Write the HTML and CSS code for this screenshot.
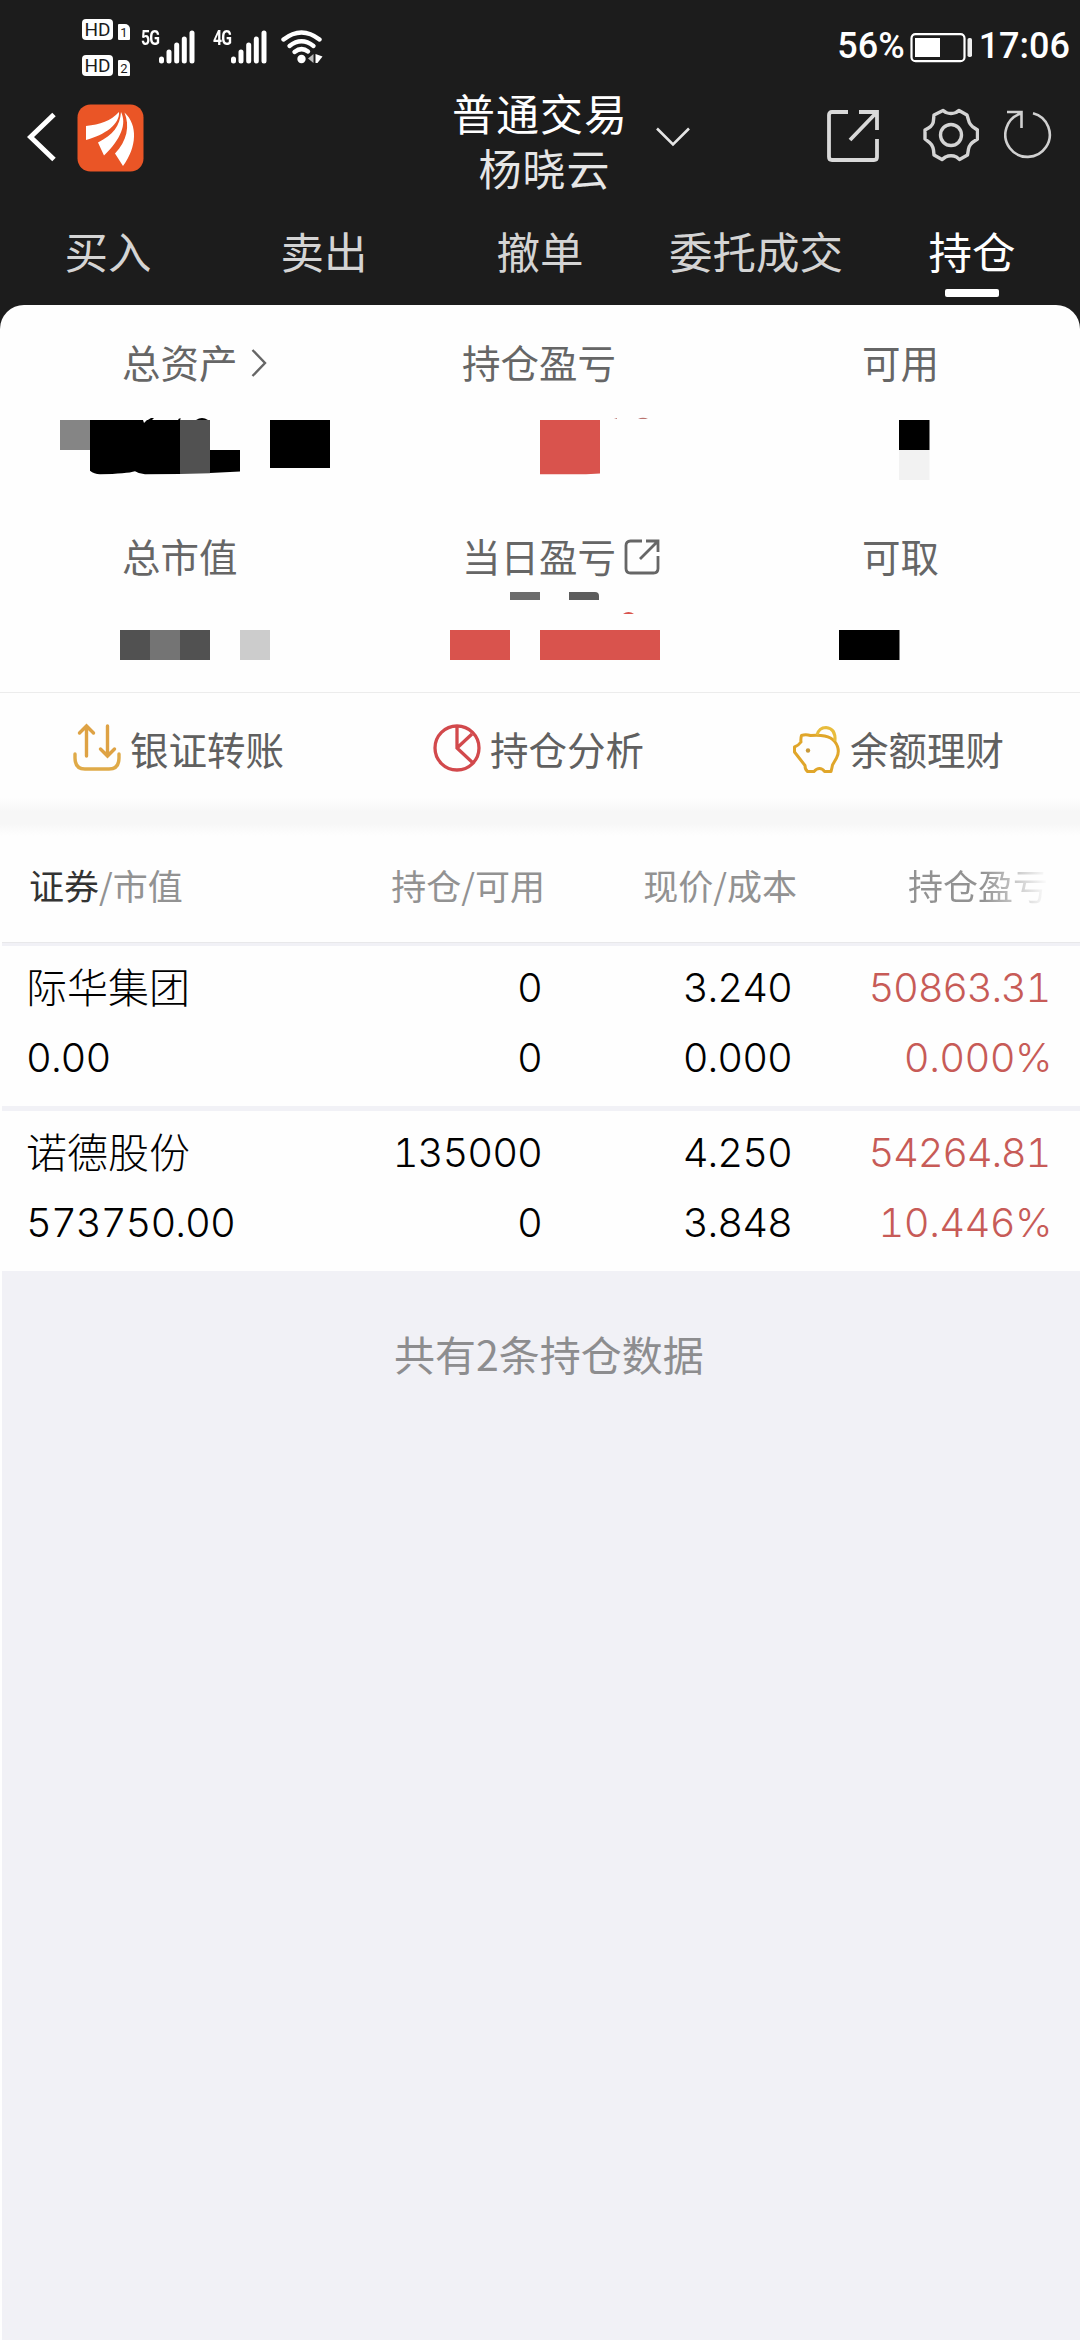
FILE: index.html
```html
<!DOCTYPE html>
<html lang="zh-CN">
<head>
  <meta charset="UTF-8" />
  <meta name="viewport" content="width=device-width, initial-scale=1.0"/>
  <title>持仓</title>
  <link rel="stylesheet" href="styles.css">
</head>
<body>
  <header class="top">
    <div class="status-bar">
      <div class="hd-group">
        <div class="hd-row"><span class="hd">HD</span><span class="sim">1</span></div>
        <div class="hd-row"><span class="hd">HD</span><span class="sim">2</span></div>
      </div>
      <div class="signal">
        <span class="net">5G</span>
        <svg width="36" height="34" viewBox="0 0 36 34" stroke="#fff" stroke-width="5" stroke-linecap="round"><path d="M2.5 29v2M10 22v9M17.7 15v16M25.3 9v22M33 3v28"/></svg>
      </div>
      <div class="signal second">
        <span class="net">4G</span>
        <svg width="36" height="34" viewBox="0 0 36 34" stroke="#fff" stroke-width="5" stroke-linecap="round"><path d="M2.5 29v2M10 22v9M17.7 15v16M25.3 9v22M33 3v28"/></svg>
      </div>
      <svg class="wifi" width="42" height="34" viewBox="0 0 42 34">
        <g fill="none" stroke="#fff" stroke-width="4.4" stroke-linecap="round">
          <path d="M2.5 9.5Q20.5-4.5 38.5 9.5"/>
          <path d="M8.5 16Q20.5 6.5 32.5 16"/>
          <path d="M13.5 22Q20.5 16.5 27 21.5"/>
        </g>
        <circle cx="20.5" cy="29" r="4.2" fill="#fff"/>
        <path d="M32.5 24v9L27 28.5z" fill="#bbb"/>
        <path d="M34.5 24v9h2l5-6.5z" fill="#fff"/>
      </svg>
      <div class="status-right">
        <span>56%</span>
        <svg class="battery" width="64" height="30" viewBox="0 0 64 30">
          <rect x="1.5" y="1.2" width="53" height="27" rx="4" fill="none" stroke="#fff" stroke-width="2.2"/>
          <path d="M5 5h25v19H5z" fill="#fff"/>
          <rect x="57.5" y="5" width="4.5" height="19" rx="1.8" fill="#eee"/>
        </svg>
        <span class="clock">17:06</span>
      </div>
    </div>

    <div class="nav">
      <svg class="back" width="30" height="50" viewBox="0 0 30 50" fill="none" stroke="#fff" stroke-width="5"><path d="M27 2.5L3.5 25 27 47.5"/></svg>
      <svg class="logo" width="68" height="68" viewBox="0 0 68 68">
        <rect x=".5" y=".5" width="66" height="67" rx="13" fill="#ea5526"/>
        <path d="M9 22C23 20.5 34 17 42 8c1 12-14 23-33 28z" fill="#fff"/>
        <path d="M44 8c6 12 0 27-17 43.500L21 38.500C36 31 43 22 44 8z" fill="#fff"/>
        <path d="M47.500 8.500C61 21 60 43 46 62l-8-12.500C50 37 53 22 47.500 8.500z" fill="#fff"/>
      </svg>
      <div class="account">
        <div>普通交易</div>
        <div class="owner">杨晓云</div>
      </div>
      <svg class="down" width="34" height="20" viewBox="0 0 34 20" fill="none" stroke="#e4e4e4" stroke-width="2.6"><path d="M1 1.5L17 17.5 33 1.5"/></svg>
      <svg class="share" width="54" height="54" viewBox="0 0 54 54" fill="none" stroke="#d9d9d9" stroke-width="3.8"><path d="M22 3H6Q3 3 3 6v42q0 3 3 3h42q3 0 3-3V30M33 3h18v18M51 3L24 31"/></svg>
      <svg class="gear" width="56" height="54" viewBox="0 0 56 54" fill="none" stroke="#d4d4d4" stroke-width="3.4" stroke-linejoin="round"><path d="M20 2.500l3 2q5 2 10 0l3-2 8 4.500 1.500 5q1 5 6 8l3 2v9l-3 2q-5 3-6 8l-1 6-8 4.500-3-2.500q-5.500-2.500-11 0L19 51.500 11 47l-.5-5q-1-6-6-9L2 31v-9l3.500-2q5-3 5-8L11 7z"/><circle cx="28" cy="27" r="10.5"/></svg>
      <svg class="refresh" width="48" height="50" viewBox="0 0 48 50" fill="none" stroke="#d0d0d0" stroke-width="2.6"><path d="M29 4.200A22.200 22.200 0 1 1 17 4.500M3 3h14.500v16"/></svg>
    </div>

    <nav class="tabs">
      <div class="tab">买入</div>
      <div class="tab">卖出</div>
      <div class="tab">撤单</div>
      <div class="tab">委托成交</div>
      <div class="tab active">持仓</div>
    </nav>
  </header>

  <section class="summary">
    <div class="cell">
      <div class="label left">总资产<svg class="more" width="16" height="30" viewBox="0 0 16 30" fill="none" stroke="#666" stroke-width="2.4"><path d="M1.5 2L14 15 1.5 28"/></svg></div>
      <svg class="amount" width="360" height="70" viewBox="0 0 360 70">
        <path d="M60 5h30v30H60z" fill="#858585"/>
        <path d="M90 5h90v54l-35 .3q-6-.3-10-3-8 2.500-35 3-6-.3-10-3.500z"/>
        <path d="M180 5h30v53.300l-30 .7z" fill="#515151"/>
        <path d="M210 35h30v21.500l-30 1.500zM270 5h60v48h-60zM143 8l8-5 3 0-6 6zM178 5l1-1.500h2L180 5zM196 5q6-4 12 0z"/>
        <path d="M143 5h4l-3 3z" fill="#fff"/>
      </svg>
    </div>
    <div class="cell">
      <div class="label middle">持仓盈亏</div>
      <svg class="amount" width="360" height="70" viewBox="0 0 360 70" fill="#d9534d">
        <path d="M180 5h60v53.500l-14 .7H180z"/>
        <path d="M254 4l3-1v1zM278 4q5-2.500 10 0z" fill="#b9736f"/>
      </svg>
    </div>
    <div class="cell">
      <div class="label right">可用</div>
      <svg class="amount" width="360" height="70" viewBox="0 0 360 70">
        <path d="M179 5h30.500v30H179z"/>
        <path d="M179 35h30.500v30H179z" fill="#f2f2f2"/>
      </svg>
    </div>
    <div class="cell">
      <div class="label left">总市值</div>
      <svg class="amount" width="360" height="80" viewBox="0 0 360 80">
        <path d="M120 45h90v30h-90z" fill="#515151"/>
        <path d="M150 45h30v30h-30z" fill="#747474"/>
        <path d="M240 45h30v30h-30z" fill="#ccc"/>
      </svg>
    </div>
    <div class="cell">
      <div class="label middle">当日盈亏<svg class="open" width="36" height="36" viewBox="0 0 36 36" fill="none" stroke="#666" stroke-width="2.8"><path d="M18 2H6.500Q2 2 2 6.500v23Q2 34 6.500 34h23q4.500 0 4.500-4.500V17M22 2h12v11M34 2L16 20"/></svg></div>
      <svg class="amount" width="360" height="80" viewBox="0 0 360 80" fill="#d9534d">
        <path d="M150 7h30v8h-30z" fill="#6c6c6c"/>
        <path d="M209 7h26q4 0 4 4v4h-30z" fill="#5d5d5d"/>
        <path d="M263 29q5.500-4 11 0z"/>
        <path d="M90 45h60v30H90zM180 45h120v30H180z"/>
      </svg>
    </div>
    <div class="cell">
      <div class="label right">可取</div>
      <svg class="amount" width="360" height="80" viewBox="0 0 360 80"><path d="M119 45h60.500v30H119z"/></svg>
    </div>
  </section>

  <section class="actions">
    <div class="action">
      <svg width="48" height="50" viewBox="0 0 48 50" fill="none" stroke="#dea244" stroke-width="3.4" stroke-linecap="round"><path d="M13.5 33V4M6.5 10l7-7 7 7M34.5 3v29M27.5 26l7 7 7-7"/><path d="M2 31v4q0 11 10 11h24q10 0 10-11v-4" stroke="#dfaa48"/></svg>
      银证转账
    </div>
    <div class="action">
      <svg width="48" height="50" viewBox="0 0 48 50" fill="none" stroke="#d2494c" stroke-width="3.3"><circle cx="24" cy="25" r="22"/><path d="M24 3v22l16 15M24 25l15-14"/></svg>
      持仓分析
    </div>
    <div class="action">
      <svg width="48" height="50" viewBox="0 0 48 50" fill="none" stroke="#e0a62a" stroke-width="3" stroke-linejoin="round"><path d="M8.500 12.500q4-1.500 9 0 14-1 20 2.500 5 3 7 8.500 2 6-1 11.500l-4 7q-.5 3-1.500 6.500h-6.500q-2-3-5-3t-5.500 3h-6.500q-2.500-2-2.500-6L5 33.500 1.500 29v-5q4-1.500 6.500-5-.5-3 .5-6.500z"/><path d="M24 12q2-7.500 9-7.500 10 1 9 13.500" stroke="#e8bc3c"/><circle cx="15" cy="27.500" r="2.200" fill="#c99a3a" stroke="none"/></svg>
      余额理财
    </div>
  </section>

  <section class="holdings">
    <div class="row table-head">
      <div><span class="sorted">证券</span>/市值</div>
      <div>持仓/可用</div>
      <div class="price-head">现价/成本</div>
      <div class="fade">持仓盈亏</div>
    </div>
    <div class="row stock">
      <div class="name">际华集团</div><div>0</div><div>3.240</div><div class="up">50863.31</div>
      <div>0.00</div><div>0</div><div>0.000</div><div class="up percent">0.000%</div>
    </div>
    <div class="row stock">
      <div class="name">诺德股份</div><div>135000</div><div>4.250</div><div class="up">54264.81</div>
      <div>573750.00</div><div>0</div><div>3.848</div><div class="up percent">10.446%</div>
    </div>
  </section>
  <footer class="count">共有2条持仓数据</footer>
</body>
</html>
```
FILE: styles.css
```css
* {
  box-sizing: border-box;
}

body {
  margin: 0;
  width: 1080px;
  height: 2340px;
  display: flex;
  flex-direction: column;
  overflow: hidden;
  background: #f1f1f6;
  color: #000;
  font-family: "Noto Sans CJK SC", sans-serif;
}

svg {
  display: block;
  flex: none;
}

.top {
  height: 330px;
  flex: none;
  background: #1c1c1c;
  color: #fff;
}

.status-bar {
  height: 95px;
  padding-left: 82px;
  padding-right: 10px;
  display: flex;
  align-items: flex-start;
}

.hd-group {
  width: 59px;
  padding-top: 19px;
  display: flex;
  flex-direction: column;
  gap: 15px;
}

.hd-row {
  display: flex;
  align-items: flex-end;
  gap: 5px;
}

.hd,
.sim {
  background: #fff;
  color: #1c1c1c;
  font-family: Roboto, sans-serif;
}

.hd {
  width: 31px;
  height: 21px;
  border-radius: 4px;
  font-size: 19px;
  line-height: 22px;
  text-align: center;
}

.sim {
  width: 12px;
  height: 16px;
  border-radius: 1px 5px 1px 1px;
  font-size: 13px;
  line-height: 17px;
  text-align: center;
}

.signal {
  width: 72px;
  padding-top: 30px;
  display: flex;
}

.signal.second {
  width: 68px;
}

.net {
  width: 18px;
  font: bold 21px/16px Roboto, sans-serif;
  letter-spacing: -1px;
  transform: scaleX(.75);
  transform-origin: left;
  white-space: nowrap;
}

.wifi {
  margin-top: 30px;
}

.status-right {
  margin-left: auto;
  padding-top: 25px;
  display: flex;
  font: 500 36px/42px Roboto, sans-serif;
}

.battery {
  margin: 8px 5px 0 5px;
}

.nav {
  height: 108px;
  padding-left: 27px;
  display: flex;
  align-items: flex-start;
}

.back {
  margin-top: 17px;
}

.logo {
  margin: 9px 0 0 20px;
}

.account {
  width: 180px;
  margin-left: 305px;
  margin-top: -10px;
  font-size: 43px;
  line-height: 55px;
  letter-spacing: 1px;
  text-align: center;
}

.owner {
  padding-left: 9px;
  color: #e6e6e6;
}

.down {
  margin: 32px 0 0 26px;
}

.share {
  margin: 14px 0 0 136px;
}

.gear {
  margin: 13px 0 0 43px;
}

.refresh {
  margin: 14px 0 0 25px;
}

.tabs {
  display: flex;
}

.tab {
  flex: 1;
  display: flex;
  flex-direction: column;
  align-items: center;
  font-size: 43.5px;
  line-height: 96px;
  color: #d4d4d4;
  white-space: nowrap;
}

.tab.active {
  color: #fff;
}

.tab.active::after {
  content: "";
  width: 54px;
  height: 8px;
  margin-top: -10px;
  border-radius: 2px;
  background: #fff;
}

.summary {
  height: 388px;
  flex: none;
  margin-top: -25px;
  padding-top: 28px;
  display: grid;
  grid-template-columns: repeat(3, 360px);
  grid-template-rows: 194px 166px;
  background: #fefefe;
  border-radius: 24px 24px 0 0;
  border-bottom: 1px solid #ececec;
}

.label {
  height: 56px;
  display: flex;
  align-items: center;
  font-size: 38.5px;
  color: #666;
}

.label.left {
  padding-left: 122px;
}

.label.middle {
  padding-left: 102px;
}

.label.right {
  padding-left: 142px;
}

.more {
  margin: 4px 0 0 13px;
}

.open {
  margin: 4px 0 0 8px;
}

.amount {
  margin-top: 26px;
}

.cell:nth-child(n+4) .amount {
  margin-top: 2px;
}

.actions {
  height: 144px;
  flex: none;
  display: grid;
  grid-template-columns: repeat(3, 360px);
  background: linear-gradient(#fefefe 105px, #f7f7f7 118px, #f7f7f7 130px, #fefefe 143px);
}

.action {
  height: 109px;
  padding-left: 73px;
  display: flex;
  align-items: center;
  gap: 9px;
  font-size: 38.5px;
  color: #606060;
}

.holdings {
  flex: none;
  border-left: 2px solid #fefefe;
}

.row {
  display: grid;
  grid-template-columns: 320px 196px 250px 1fr;
  padding: 0 28px 0 25px;
  background: #fefefe;
  text-align: right;
}

.row > div:nth-child(4n+1) {
  text-align: left;
}

.table-head {
  height: 106px;
  padding-left: 27px;
  padding-right: 32px;
  line-height: 95px;
  border-bottom: 1px solid #e8e8ea;
  font-size: 35px;
  color: #929292;
}

.sorted {
  color: #333;
}

.price-head {
  margin-right: -2px;
}

.fade {
  background: linear-gradient(to right, #929292 calc(100% - 65px), #fefefe);
  -webkit-background-clip: text;
  background-clip: text;
  color: transparent;
}

.stock {
  height: 160px;
  margin-top: 3px;
  padding: 7px 28px 0 24px;
  grid-template-columns: 321px 195px 250px 1fr;
  grid-template-rows: 70px 70px;
  align-content: start;
  font-family: Inter, "Noto Sans CJK SC", sans-serif;
  font-weight: 300;
  font-size: 40px;
  line-height: 70px;
  letter-spacing: -1px;
  font-variant-numeric: tabular-nums;
}

.stock + .stock {
  margin-top: 5px;
}

.name {
  font-family: "Noto Sans CJK SC", sans-serif;
  font-size: 41px;
  line-height: 65px;
  letter-spacing: 0;
}

.up {
  color: #c75b57;
}

.stock .up:not(.percent) {
  padding-right: 2px;
  letter-spacing: -1.3px;
}

.stock .percent {
  letter-spacing: -.6px;
}

.count {
  flex: 1;
  border-left: 2px solid #fefefe;
  padding: 51px 0 0 16px;
  font-size: 41px;
  line-height: 62px;
  text-align: center;
  color: #8d8d8f;
}
```
